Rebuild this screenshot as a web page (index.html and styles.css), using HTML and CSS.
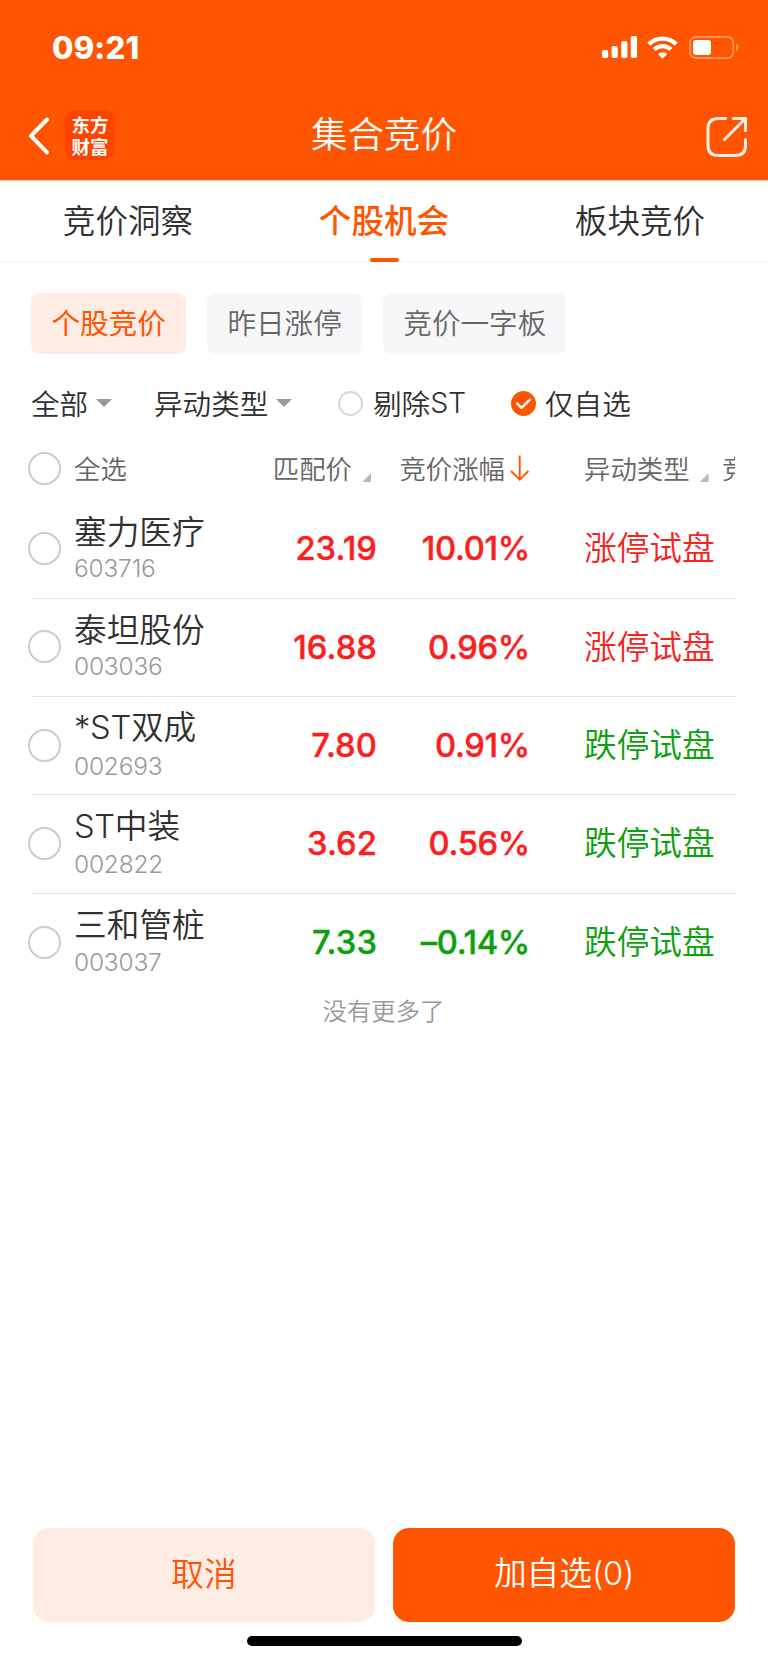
FILE: index.html
```html
<!DOCTYPE html>
<html lang="zh-CN">
<head>
	<meta charset="utf-8">
	<title>集合竞价</title>
	<link rel="stylesheet" href="styles.css">
</head>
<body>
	<header class="top">
		<div class="status">
			<span class="time">09:21</span>
			<div class="status-icons">
				<svg class="signal" width="36" height="22" viewBox="0 0 36 22" fill="#fff">
					<rect x="0" y="14" width="6.2" height="8" rx="1.8"/>
					<rect x="9.6" y="10" width="6.2" height="12" rx="1.8"/>
					<rect x="19.2" y="5" width="6.2" height="17" rx="1.8"/>
					<rect x="28.8" y="0" width="6.2" height="22" rx="1.8"/>
				</svg>
				<svg class="wifi" width="31" height="23" viewBox="0 0 31 23" fill="none" stroke="#fff">
					<path d="M1.8 8.2a19.7 19.7 0 0 1 27.4 0" stroke-width="4.4"/>
					<path d="M7.1 13.5a12.3 12.3 0 0 1 16.8 0" stroke-width="4.2"/>
					<path d="M15.5 22.8l-4.6-4.7a6.6 6.6 0 0 1 9.2 0z" fill="#fff" stroke="none"/>
				</svg>
				<svg class="battery" width="50" height="23" viewBox="0 0 50 23">
					<rect x="0.9" y="0.9" width="43.4" height="21.2" rx="6" fill="none" stroke="#ff9a66" stroke-width="1.7"/>
					<rect x="4" y="4" width="18" height="15" rx="3" fill="#fff"/>
					<path d="M47 7.5q5 4 0 8z" fill="#ff9a66"/>
				</svg>
			</div>
		</div>
		<div class="navbar">
			<svg class="back" width="22" height="38" viewBox="0 0 22 38" fill="none" stroke="#fff" stroke-width="4" stroke-linecap="round" stroke-linejoin="round">
				<path d="M19 2.5L3 18.8l16 16.5"/>
			</svg>
			<div class="logo">东方<br>财富</div>
			<h1>集合竞价</h1>
			<svg class="share" width="42" height="42" viewBox="0 0 42 42" fill="none" stroke="#ffeee5" stroke-width="3" stroke-linecap="round" stroke-linejoin="round">
				<path d="M19.5 2.5H12.5Q2 2.5 2 12.5v17Q2 39.5 12.5 39.5h16.5Q39.5 39.5 39.5 29.5V23.5"/>
				<path d="M27.5 2.5H39.5V14.5M39 3L18.5 23.5"/>
			</svg>
		</div>
	</header>

	<nav class="tabs">
		<a class="tab">竞价洞察</a>
		<a class="tab active">个股机会</a>
		<a class="tab">板块竞价</a>
	</nav>

	<div class="chips">
		<span class="chip on">个股竞价</span>
		<span class="chip">昨日涨停</span>
		<span class="chip">竞价一字板</span>
	</div>

	<div class="filters">
		<span class="drop all">全部</span>
		<span class="drop type">异动类型</span>
		<span class="option no-st"><i class="dot"></i>剔除<b class="latin">ST</b></span>
		<span class="option">
			<svg class="tick" width="25" height="25" viewBox="0 0 25 25">
				<circle cx="12.5" cy="12.5" r="12.5" fill="#ff5500"/>
				<path d="M6.2 12.6l4.3 4.2 8.4-8.2" fill="none" stroke="#fff" stroke-width="2.4" stroke-linecap="round" stroke-linejoin="round"/>
			</svg>仅自选
		</span>
	</div>

	<main class="table">
		<div class="row head">
			<i class="check"></i>
			<span>全选</span>
			<span class="price sortable">匹配价</span>
			<span class="pct">竞价涨幅<svg class="down" width="20" height="26" viewBox="0 0 20 26" fill="none" stroke="#ff5500" stroke-width="1.9">
				<path d="M9.7 0.5V24.5M1 16l8.7 8.7L18.4 16"/>
			</svg></span>
			<span class="kind sortable">异动类型</span>
			<span class="next">竞价</span>
		</div>
		<div class="row">
			<i class="check"></i>
			<div class="stock"><span class="name">塞力医疗</span><span class="code">603716</span></div>
			<span class="price up">23.19</span>
			<span class="pct up">10.01%</span>
			<span class="kind up">涨停试盘</span>
		</div>
		<div class="row">
			<i class="check"></i>
			<div class="stock"><span class="name">泰坦股份</span><span class="code">003036</span></div>
			<span class="price up">16.88</span>
			<span class="pct up">0.96%</span>
			<span class="kind up">涨停试盘</span>
		</div>
		<div class="row">
			<i class="check"></i>
			<div class="stock"><span class="name"><b class="latin">*ST</b>双成</span><span class="code">002693</span></div>
			<span class="price up">7.80</span>
			<span class="pct up">0.91%</span>
			<span class="kind fall">跌停试盘</span>
		</div>
		<div class="row">
			<i class="check"></i>
			<div class="stock"><span class="name"><b class="latin">ST</b>中装</span><span class="code">002822</span></div>
			<span class="price up">3.62</span>
			<span class="pct up">0.56%</span>
			<span class="kind fall">跌停试盘</span>
		</div>
		<div class="row">
			<i class="check"></i>
			<div class="stock"><span class="name">三和管桩</span><span class="code">003037</span></div>
			<span class="price fall">7.33</span>
			<span class="pct fall">–0.14%</span>
			<span class="kind fall">跌停试盘</span>
		</div>
	</main>
	<p class="nomore">没有更多了</p>

	<footer class="actions">
		<button class="btn cancel">取消</button>
		<button class="btn add">加自选<span class="count">(0)</span></button>
	</footer>
	<div class="home-bar"></div>
</body>
</html>
```
FILE: styles.css
```css
* {
	box-sizing: border-box;
}

body {
	margin: 0;
	width: 768px;
	height: 1663px;
	display: flex;
	flex-direction: column;
	overflow: hidden;
	background: #fff;
	color: #303030;
	font-family: "Noto Sans CJK SC", sans-serif;
	font-weight: 350;
	line-height: 1;
}

svg {
	display: block;
	flex: none;
}

/* header */
.top {
	height: 181px;
	background: #ff5500;
	border-bottom: 1px solid #ffc4a8;
	color: #fff;
}

.status {
	display: flex;
	justify-content: space-between;
	height: 94px;
	padding: 0 29px 0 52px;
	align-items: center;
}

.time {
	font: 800 31px/1 Inter, sans-serif;
	letter-spacing: 0.2px;
}

.status-icons {
	display: flex;
	align-items: center;
	gap: 10px;
}

.wifi {
	margin: 0 1px 0 -1px;
}

.navbar {
	display: flex;
	align-items: center;
	height: 83px;
	padding: 0 20px 0 28px;
}

.logo {
	width: 50px;
	height: 50px;
	margin: -1px 0 0 15px;
	padding-top: 3px;
	border-radius: 10px;
	background: #ff4400;
	text-align: center;
	font-size: 18.5px;
	font-weight: 700;
	line-height: 22px;
}

.navbar h1 {
	flex: 1;
	margin: 0;
	padding: 0 53px 4px 0;
	text-align: center;
	font-size: 36.5px;
	font-weight: 350;
}

.share {
	margin-top: 3px;
}

/* tabs */
.tabs {
	display: flex;
	height: 82px;
	border-bottom: 2px solid #f5f5f5;
}

.tab {
	flex: 1;
	display: flex;
	position: relative;
	align-items: center;
	justify-content: center;
	padding-bottom: 4px;
	font-size: 32.6px;
}

.tab.active {
	color: #ff5500;
	font-weight: 500;
}

.tab.active::after {
	content: "";
	position: absolute;
	bottom: -1px;
	width: 29px;
	height: 4px;
	border-radius: 2px;
	background: #ff5500;
}

.chips {
	display: flex;
	gap: 21px;
	padding: 30px 31px 0;
}

.chip {
	height: 61px;
	padding: 0 20px 0 20.5px;
	border-radius: 8px;
	background: #f7f7fa;
	color: #666;
	font-size: 28.6px;
	line-height: 58px;
}

.chip.on {
	background: #ffece4;
	color: #ff5500;
	font-weight: 400;
}

/* filters */
.filters {
	display: flex;
	align-items: center;
	height: 73px;
	margin-top: 13px;
	padding: 0 0 1px 31px;
	font-size: 28.6px;
}

.drop,
.option {
	display: flex;
	align-items: center;
}

.drop::after {
	content: "";
	margin-left: 8px;
	border: 8px solid transparent;
	border-top-color: #999;
	border-bottom: 0;
}

.drop.all {
	width: 123px;
}

.drop.type {
	width: 184px;
}

.option {
	gap: 9px;
}

.no-st {
	width: 173px;
	gap: 0;
}

.dot {
	width: 25px;
	height: 25px;
	margin-right: 10px;
	border: 2px solid #d8d8d8;
	border-radius: 50%;
}

.latin {
	font-family: Inter, sans-serif;
	font-weight: 350;
	letter-spacing: -0.3px;
}

/* stock table */
.table {
	margin: 0 31px;
}

.row {
	display: grid;
	grid-template-columns: 43px 150px 153px 153px 54px 1fr;
	align-items: center;
	height: 98.25px;
	border-bottom: 1px solid #e8e8e8;
}

.row:last-child {
	border-bottom: 0;
}

.check {
	width: 33px;
	height: 33px;
	margin: -1px 0 0 -3px;
	border: 2px solid #ccc;
	border-radius: 50%;
}

.stock {
	display: flex;
	flex-direction: column;
	gap: 7.5px;
	padding-bottom: 1px;
	white-space: nowrap;
}

.name {
	font-size: 32.7px;
}

.code {
	color: #999;
	font: 350 24.5px/1.2 Inter, sans-serif;
	letter-spacing: -0.2px;
}

.price,
.pct {
	padding-bottom: 1px;
	text-align: right;
	font: 500 32.7px/1 Inter, sans-serif;
	letter-spacing: 0.1px;
	-webkit-text-stroke: 0.4px currentColor;
}

.pct {
	letter-spacing: -0.3px;
}

.row .kind {
	grid-column: 6;
	padding-bottom: 5px;
	font-size: 32.7px;
}

.up {
	color: #fa2020;
}

.fall {
	color: #0ca00c;
}

.head {
	grid-template-columns: 43px 150px 153px 153px 54px 138px 1fr;
	height: 60.5px;
	padding-bottom: 2px;
	border: 0;
	white-space: nowrap;
	color: #666;
	font-size: 26.4px;
}

.head span {
	padding-bottom: 2px;
}

.head .price,
.head .pct,
.head .kind {
	display: flex;
	justify-content: flex-end;
	align-items: center;
	padding-bottom: 2px;
	font: inherit;
	letter-spacing: 0;
	-webkit-text-stroke: 0;
}

.head .kind {
	justify-content: flex-start;
}

.sortable::after {
	content: "";
	width: 9px;
	height: 9px;
	margin: 19px 6px 0 10px;
	background: #b8b8b8;
	clip-path: polygon(100% 0, 100% 100%, 0 100%);
}

.down {
	margin-left: 5px;
}

.next {
	width: 13px;
	overflow: hidden;
}

.nomore {
	margin: 6px 1px 0 0;
	text-align: center;
	color: #999;
	font-size: 24.4px;
}

/* bottom */
.actions {
	display: flex;
	gap: 18px;
	margin-top: auto;
	padding: 0 33px;
}

.btn {
	flex: 1;
	height: 94px;
	padding: 0 0 5px;
	border: 0;
	border-radius: 16px;
	background: #ffece4;
	color: #ff5500;
	font: 350 32.7px/1 "Noto Sans CJK SC", sans-serif;
}

.btn.add {
	background: #ff5500;
	color: #fff;
}

.count {
	font-family: Inter, sans-serif;
	letter-spacing: -0.3px;
}

.home-bar {
	width: 275px;
	height: 10px;
	margin: 14px auto 17px;
	border-radius: 5px;
	background: #000;
}
```
